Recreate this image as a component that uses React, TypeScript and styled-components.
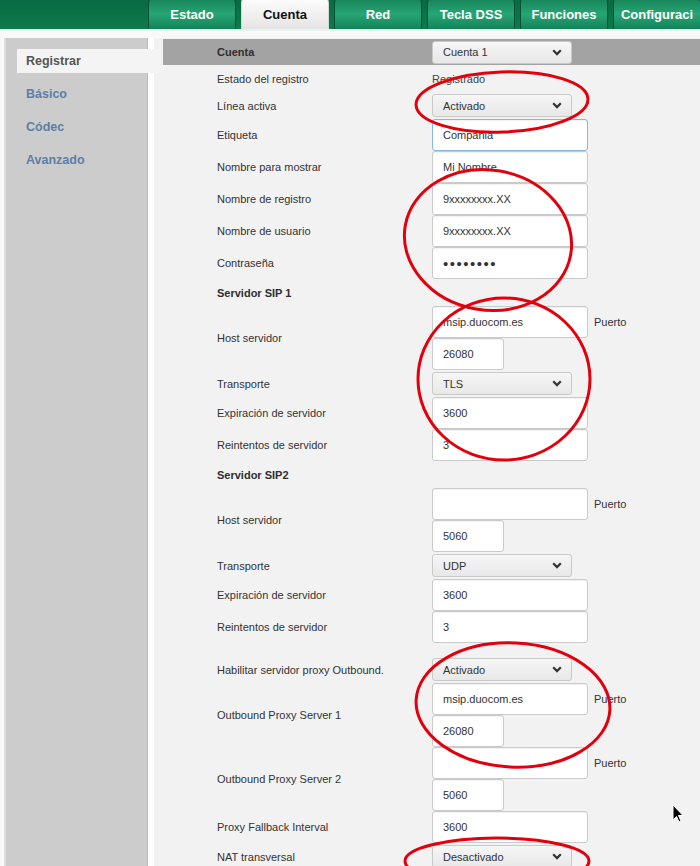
import * as React from 'react';
import styled, { createGlobalStyle } from 'styled-components';

const GlobalStyle = createGlobalStyle`
  html, body {
    margin: 0;
    padding: 0;
  }
  body {
    background: #f9f9f9;
    font-family: "Liberation Sans", Arial, sans-serif;
    overflow: hidden;
  }
`;

const Page = styled.div`
  position: relative;
  width: 700px;
  height: 866px;
  overflow: hidden;
`;

const Header = styled.div`
  height: 29px;
  display: flex;
  align-items: flex-end;
  gap: 5px;
  padding-left: 148px;
  overflow: hidden;
  background: linear-gradient(#0a6a43, #0c7b4d);
  border-bottom: 2px solid #e8f3ed;
`;

interface TabProps {
  $active?: boolean
}

const Tab = styled.div<TabProps>`
  flex: 0 0 88px;
  height: 34px;
  box-sizing: border-box;
  padding-top: 3px;
  display: flex;
  align-items: center;
  justify-content: center;
  border: 1px solid ${(p) => (p.$active ? '#d6d6d6' : '#0a4f33')};
  border-bottom: none;
  border-radius: 8px 8px 0 0;
  font-size: 13px;
  font-weight: bold;
  white-space: nowrap;
  color: ${(p) => (p.$active ? '#111' : '#fff')};
  background: ${(p) => (p.$active
    ? 'linear-gradient(#ffffff, #e4e4e4)'
    : 'linear-gradient(#137e53, #27a574 55%, #13835a)')};
`;

const Body = styled.div`
  display: flex;
  padding-top: 7px;
  height: 835px;
`;

const Sidebar = styled.nav`
  margin-left: 4px;
  width: 144px;
  flex-shrink: 0;
  box-sizing: border-box;
  padding: 11px 0 0 11px;
  background: #cccccc;
  border-left: 2px solid #dedede;
  border-right: 1px solid #bcbcbc;
`;

const Gutter = styled.div`
  width: 6px;
  flex-shrink: 0;
  background: #ffffff;
`;

interface NavProps {
  $active?: boolean
}

const NavItem = styled.div<NavProps>`
  position: relative;
  z-index: 1;
  width: 143px;
  height: 24px;
  line-height: 24px;
  box-sizing: border-box;
  padding-left: 9px;
  margin-bottom: 9px;
  font-size: 12.5px;
  font-weight: bold;
  color: ${(p) => (p.$active ? '#555' : '#5c7ea8')};
  background: ${(p) => (p.$active ? '#f4f4f4' : 'transparent')};
`;

const Main = styled.main`
  flex: 1;
  background: #f2f2f2;
  padding: 1px 0 0 9px;
`;

interface RowProps {
  $h: number,
  $shaded?: boolean
}

const Row = styled.div<RowProps>`
  display: grid;
  grid-template-columns: 215px 1fr;
  align-items: center;
  padding-left: 54px;
  min-height: ${(p) => p.$h}px;
  background: ${(p) => (p.$shaded ? '#a3a3a3' : 'transparent')};
`;

interface LabelProps {
  $bold?: boolean
}

const Label = styled.span<LabelProps>`
  font-size: 11px;
  font-weight: ${(p) => (p.$bold ? 'bold' : 'normal')};
  color: ${(p) => (p.$bold ? '#2e2e2e' : '#333')};
`;

const Value = styled.span`
  font-size: 11px;
  color: #444;
`;

const FieldStack = styled.div`
  display: flex;
  flex-direction: column;
`;

const FieldLine = styled.div`
  display: flex;
  align-items: center;
  gap: 6px;
`;

interface InputProps {
  $w?: number,
  $focus?: boolean
}

const TextInput = styled.input<InputProps>`
  box-sizing: border-box;
  width: ${(p) => p.$w ?? 156}px;
  height: 32px;
  margin: 0;
  padding: 0 10px;
  font: 11px "Liberation Sans", Arial, sans-serif;
  color: #333;
  background: #fff;
  border: 1px solid ${(p) => (p.$focus ? '#86b7e2' : '#cacaca')};
  border-radius: 3px;
  box-shadow: inset 0 1px 1px rgba(0, 0, 0, 0.06);
  outline: none;

  &[type='password'] {
    font-size: 15px;
    letter-spacing: 1.5px;
  }
`;

const SelectBox = styled.div`
  box-sizing: border-box;
  width: 140px;
  height: 23px;
  display: flex;
  align-items: center;
  justify-content: space-between;
  padding: 0 9px 0 10px;
  font-size: 11px;
  color: #333;
  background: linear-gradient(#f6f6f6, #e8e8e8);
  border: 1px solid #c9c9c9;
  border-radius: 3px;
`;

const Overlay = styled.svg`
  position: absolute;
  top: 0;
  left: 0;
  pointer-events: none;
`;

function Chevron() {
  return (
    <svg width="10" height="7" viewBox="0 0 10 7">
      <path d="M1.2 1.3 L5 5.1 L8.8 1.3" fill="none" stroke="#333" strokeWidth="2.2" />
    </svg>
  );
}

function Select({ value }: { value: string }) {
  return (
    <SelectBox role="combobox">
      <span>{value}</span>
      <Chevron />
    </SelectBox>
  );
}

function InputRow({ label, value, focus, password }: {
  label: string, value: string, focus?: boolean, password?: boolean,
}) {
  return (
    <Row $h={32}>
      <Label>{label}</Label>
      <TextInput
        type={password ? 'password' : 'text'}
        defaultValue={value}
        $focus={focus}
      />
    </Row>
  );
}

function SelectRow({ label, value }: { label: string, value: string }) {
  return (
    <Row $h={27}>
      <Label>{label}</Label>
      <div><Select value={value} /></div>
    </Row>
  );
}

function HostRow({ label, host, port }: { label: string, host: string, port: string }) {
  return (
    <Row $h={64}>
      <Label>{label}</Label>
      <FieldStack>
        <FieldLine>
          <TextInput defaultValue={host} />
          <Label>Puerto</Label>
        </FieldLine>
        <TextInput $w={72} defaultValue={port} />
      </FieldStack>
    </Row>
  );
}

const tabs = ['Estado', 'Cuenta', 'Red', 'Tecla DSS', 'Funciones', 'Configuraci'];
const navItems = ['Registrar', 'Básico', 'Códec', 'Avanzado'];

function App() {
  return (
    <Page>
      <GlobalStyle />
      <Header>
        {tabs.map((t) => (
          <Tab key={t} $active={t === 'Cuenta'}>{t}</Tab>
        ))}
      </Header>
      <Body>
        <Sidebar>
          {navItems.map((n, i) => (
            <NavItem key={n} $active={i === 0}>{n}</NavItem>
          ))}
        </Sidebar>
        <Gutter />
        <Main>
          <Row $h={26} $shaded>
            <Label $bold>Cuenta</Label>
            <div><Select value="Cuenta 1" /></div>
          </Row>
          <Row $h={27}>
            <Label>Estado del registro</Label>
            <Value>Registrado</Value>
          </Row>
          <SelectRow label="Línea activa" value="Activado" />
          <InputRow label="Etiqueta" value="Compania" focus />
          <InputRow label="Nombre para mostrar" value="Mi Nombre" />
          <InputRow label="Nombre de registro" value="9xxxxxxxx.XX" />
          <InputRow label="Nombre de usuario" value="9xxxxxxxx.XX" />
          <InputRow label="Contraseña" value="password" password />
          <Row $h={27}>
            <Label $bold>Servidor SIP 1</Label>
          </Row>
          <HostRow label="Host servidor" host="msip.duocom.es" port="26080" />
          <SelectRow label="Transporte" value="TLS" />
          <InputRow label="Expiración de servidor" value="3600" />
          <InputRow label="Reintentos de servidor" value="3" />
          <Row $h={27}>
            <Label $bold>Servidor SIP2</Label>
          </Row>
          <HostRow label="Host servidor" host="" port="5060" />
          <SelectRow label="Transporte" value="UDP" />
          <InputRow label="Expiración de servidor" value="3600" />
          <InputRow label="Reintentos de servidor" value="3" />
          <Row $h={13} />
          <SelectRow label="Habilitar servidor proxy Outbound." value="Activado" />
          <HostRow label="Outbound Proxy Server 1" host="msip.duocom.es" port="26080" />
          <HostRow label="Outbound Proxy Server 2" host="" port="5060" />
          <InputRow label="Proxy Fallback Interval" value="3600" />
          <SelectRow label="NAT transversal" value="Desactivado" />
        </Main>
      </Body>
      <Overlay width="700" height="866" viewBox="0 0 700 866">
        <g fill="none" stroke="#e2000c" strokeWidth="3">
          <ellipse cx="502" cy="102" rx="86" ry="30" transform="rotate(-2 502 102)" />
          <ellipse cx="488" cy="240" rx="84" ry="70" transform="rotate(10 488 240)" />
          <ellipse cx="504" cy="379" rx="86" ry="81" />
          <ellipse cx="513" cy="705" rx="97" ry="62" transform="rotate(3 513 705)" />
          <ellipse cx="497" cy="861" rx="92" ry="23" />
        </g>
        <path
          d="M673 805 L673 820 L676.5 816.5 L679 822 L681 821 L678.5 815.5 L683 815.5 Z"
          fill="#000"
          stroke="#fff"
          strokeWidth="1"
        />
      </Overlay>
    </Page>
  );
}

export default App;
